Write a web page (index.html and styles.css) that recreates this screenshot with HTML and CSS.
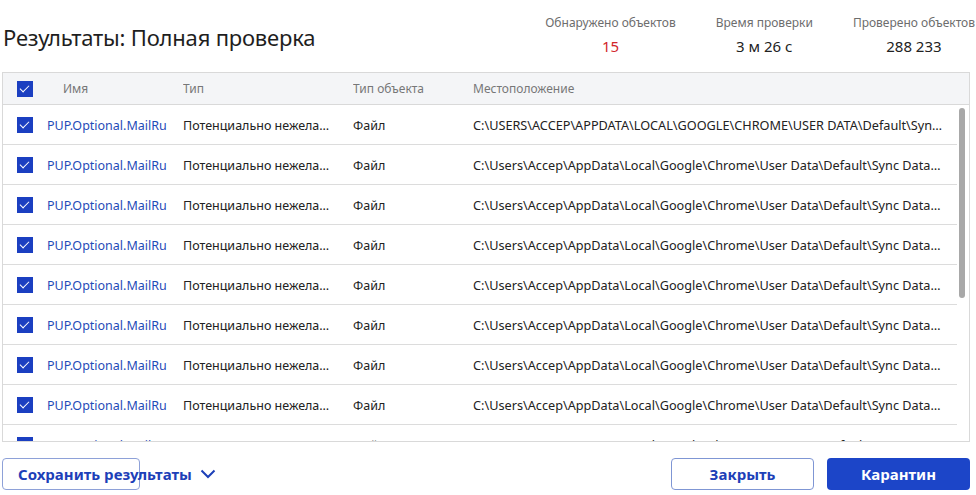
FILE: index.html
```html
<!DOCTYPE html>
<html lang="ru">
<head>
    <meta charset="UTF-8">
    <meta name="viewport" content="width=device-width, initial-scale=1.0">
    <title>Результаты: Полная проверка</title>
    <link rel="stylesheet" href="styles.css">
</head>
<body>
    <div id="results-window">
        <!-- Title and scan stats -->
        <div class="top-bar">
            <h1 class="title">Результаты: Полная проверка</h1>
            <div class="stats">
                <div class="stat">
                    <div class="stat-label">Обнаружено объектов</div>
                    <div class="stat-value stat-danger">15</div>
                </div>
                <div class="stat">
                    <div class="stat-label">Время проверки</div>
                    <div class="stat-value">3 м 26 с</div>
                </div>
                <div class="stat">
                    <div class="stat-label">Проверено объектов</div>
                    <div class="stat-value">288 233</div>
                </div>
            </div>
        </div>

        <!-- Detected objects table -->
        <div class="results-table">
            <div class="table-head">
                <div class="cell cell-check"><span class="checkbox"></span></div>
                <div class="cell head-name">Имя</div>
                <div class="cell">Тип</div>
                <div class="cell">Тип объекта</div>
                <div class="cell">Местоположение</div>
            </div>
            <div class="table-body">
                <div class="rows" id="rows"></div>
                <div class="scrollbar"><div class="scroll-thumb"></div></div>
            </div>
        </div>

        <!-- Bottom actions -->
        <div class="footer">
            <button class="btn btn-save" type="button">Сохранить результаты
                <svg class="chevron" width="16" height="10" viewBox="0 0 16 10"><path d="M1.5 1.5 L8 8 L14.5 1.5" fill="none" stroke="#1d40b8" stroke-width="2"/></svg>
            </button>
            <div class="footer-right">
                <button class="btn btn-outline" type="button">Закрыть</button>
                <button class="btn btn-primary" type="button">Карантин</button>
            </div>
        </div>
    </div>

    <script src="app.js"></script>
</body>
</html>
```

FILE: styles.css
```css
body {
    margin: 0;
    padding: 0;
    background-color: #fff;
    color: #222;
    font-family: "Noto Sans", "Open Sans", sans-serif;
}

#results-window {
    width: 976px;
    height: 495px;
    display: flex;
    flex-direction: column;
    box-sizing: border-box;
}

.top-bar {
    height: 72px;
    display: flex;
    justify-content: space-between;
    align-items: flex-start;
}

.title {
    margin: 22px 0 0 3px;
    font-size: 22px;
    font-weight: 400;
    color: #1e1e1e;
    letter-spacing: -0.2px;
}

.stats {
    display: flex;
    gap: 40px;
    padding: 14px 1px 0 0;
}

.stat {
    text-align: center;
}

.stat-label {
    font-size: 12px;
    color: #6d6d6d;
    line-height: 18px;
}

.stat-value {
    font-size: 15px;
    font-weight: 400;
    color: #222;
    margin-top: 4px;
    line-height: 20px;
}

.stat-danger {
    color: #d2262c;
}

.results-table {
    margin-left: 2px;
    width: 968px;
    height: 370px;
    border: 1px solid #d9d9d9;
    box-sizing: border-box;
    display: flex;
    flex-direction: column;
    overflow: hidden;
}

.table-head,
.row {
    display: grid;
    grid-template-columns: 44px 136px 170px 120px 1fr;
    align-items: center;
}

.table-head {
    height: 31px;
    background-color: #f4f5f7;
    border-bottom: 1px solid #d9d9d9;
    font-size: 12px;
    color: #777;
    flex-shrink: 0;
}

.cell {
    white-space: nowrap;
    overflow: hidden;
    text-overflow: ellipsis;
}

.cell-check {
    padding-left: 14px;
    display: flex;
}

.head-name {
    padding-left: 16px;
}

.checkbox {
    width: 16px;
    height: 16px;
    background-color: #1b3fc1;
    display: inline-block;
    position: relative;
}

.checkbox::after {
    content: "";
    position: absolute;
    left: 5px;
    top: 2px;
    width: 4px;
    height: 8px;
    border: solid #fff;
    border-width: 0 1.5px 1.5px 0;
    transform: rotate(45deg);
}

.table-body {
    flex: 1;
    display: flex;
    overflow: hidden;
}

.rows {
    flex: 1;
}

.row {
    height: 39px;
    border-bottom: 1px solid #dcdcdc;
    font-size: 12.5px;
    padding-top: 1px;
    box-sizing: border-box;
    height: 40px;
}

.cell-name {
    color: #1f4bb8;
    font-size: 12.5px;
}

.cell-type {
    color: #222;
    padding-right: 22px;
}

.cell-kind {
    color: #222;
}

.cell-path {
    color: #222;
    font-size: 12.7px;
    padding-right: 12px;
}

.scrollbar {
    width: 12px;
    flex-shrink: 0;
    padding: 3px 0 0 2px;
    box-sizing: border-box;
}

.scroll-thumb {
    width: 6px;
    height: 190px;
    border-radius: 3px;
    background-color: #a8a8a8;
}

.footer {
    display: flex;
    justify-content: space-between;
    padding: 16px 6px 0 2px;
}

.footer-right {
    display: flex;
    gap: 13px;
}

.btn {
    height: 32px;
    width: 143px;
    box-sizing: border-box;
    border-radius: 4px;
    font-family: "Noto Sans", sans-serif;
    font-size: 15px;
    font-weight: 700;
    cursor: pointer;
}

.btn-save {
    width: 138px;
    border: 1px solid #8ea1d8;
    background: #fff;
    color: #1d40b8;
    text-align: left;
    padding: 0 0 0 15px;
    white-space: nowrap;
    overflow: visible;
}

.chevron {
    margin-left: 4px;
    vertical-align: 1px;
}

.btn-outline {
    border: 1px solid #7f96d4;
    background: #fff;
    color: #1d40b8;
}

.btn-primary {
    border: none;
    background-color: #1c45c8;
    color: #fff;
}
```

FILE: app.js
```js
const rows = document.getElementById('rows');

const paths = [
    'C:\\USERS\\ACCEP\\APPDATA\\LOCAL\\GOOGLE\\CHROME\\USER DATA\\Default\\Sync Data\\LevelDB\\000003.log'
];
for (let i = 0; i < 8; i++) {
    paths.push('C:\\Users\\Accep\\AppData\\Local\\Google\\Chrome\\User Data\\Default\\Sync Data\\LevelDB\\00000' + (i + 4) + '.ldb');
}

paths.forEach(function(path) {
    const row = document.createElement('div');
    row.className = 'row';
    row.innerHTML =
        '<div class="cell cell-check"><span class="checkbox"></span></div>' +
        '<div class="cell cell-name">PUP.Optional.MailRu</div>' +
        '<div class="cell cell-type">Потенциально нежелательное ПО</div>' +
        '<div class="cell cell-kind">Файл</div>' +
        '<div class="cell cell-path"></div>';
    row.querySelector('.cell-path').textContent = path;
    rows.appendChild(row);
});
```
